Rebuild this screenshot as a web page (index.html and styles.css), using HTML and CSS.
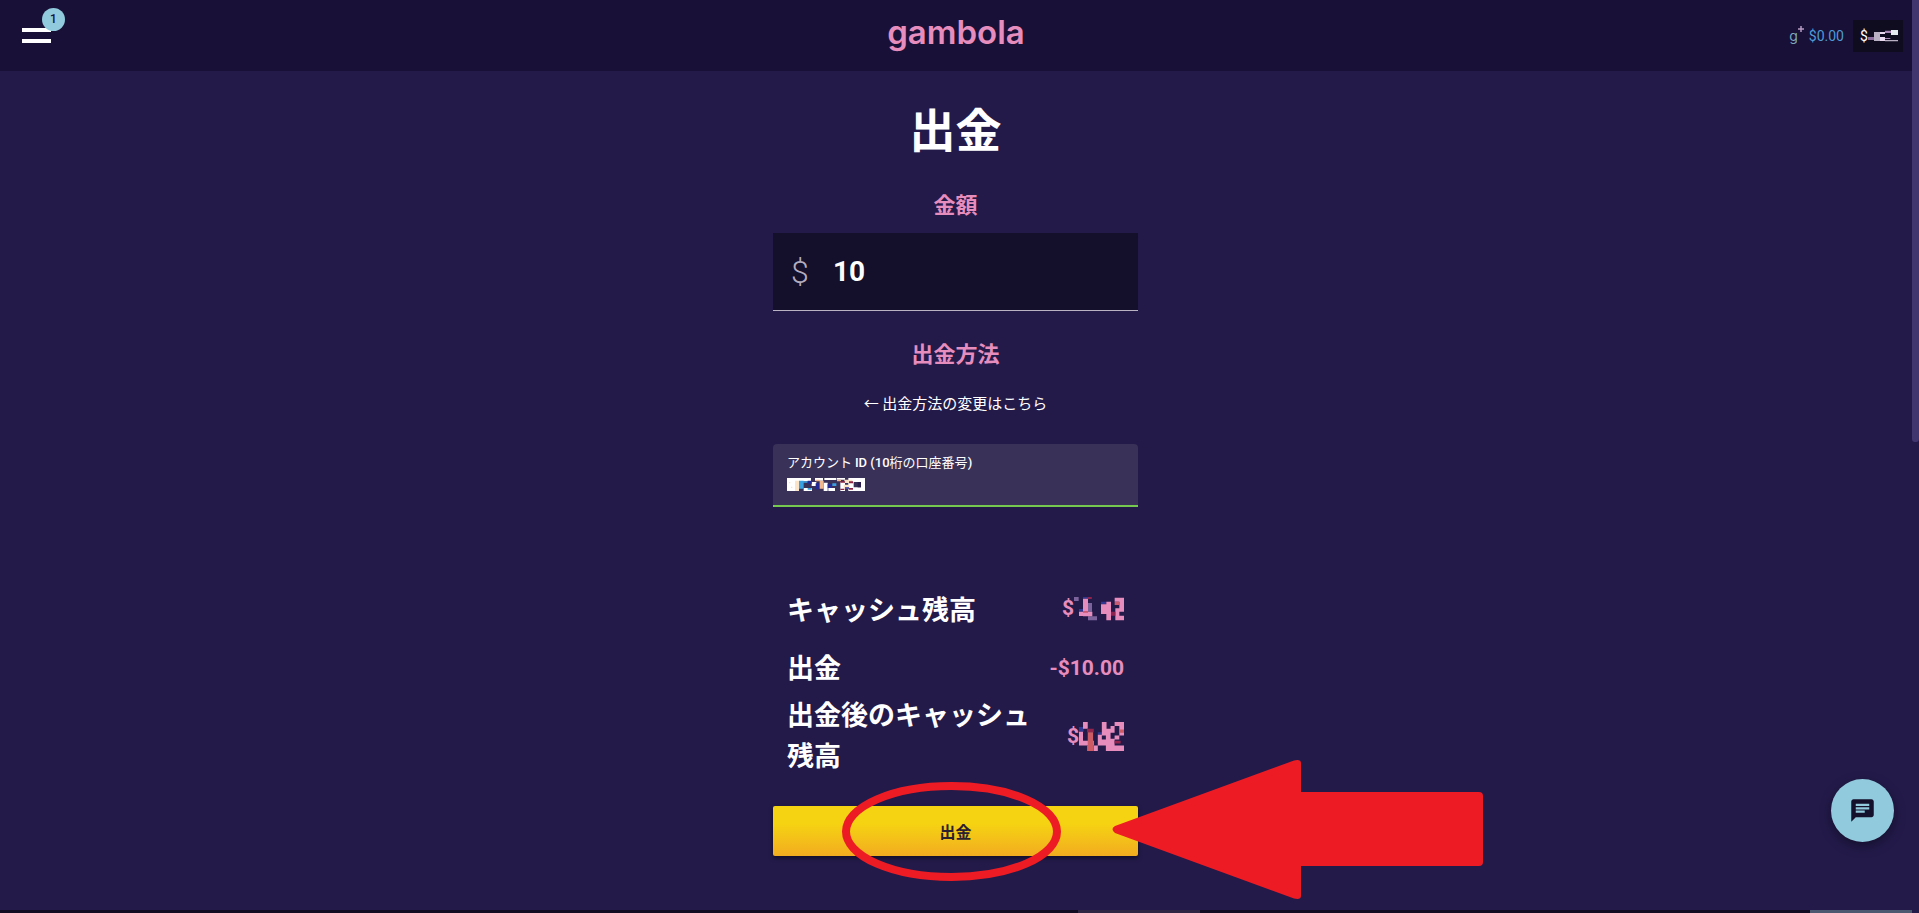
FILE: index.html
```html
<!DOCTYPE html>
<html lang="ja">
<head>
    <meta charset="UTF-8">
    <meta name="viewport" content="width=device-width, initial-scale=1.0">
    <title>出金</title>
    <link rel="stylesheet" href="styles.css">
</head>
<body>
    <header class="header">
        <div class="header-left">
            <button type="button" class="menu-button" aria-label="メニュー">
                <span class="menu-line"></span>
                <span class="menu-line"></span>
                <span class="menu-badge">1</span>
            </button>
        </div>
        <a href="#" class="logo">gambola</a>
        <div class="header-right">
            <a href="#" class="bonus">
                <span class="bonus-icon">g<svg class="bonus-star" viewBox="0 0 6 6"><path d="M3 0v6M0 3h6" stroke="#b79bc4" stroke-width="1.5"/></svg></span>
                <span>$0.00</span>
            </a>
            <a href="#" class="cash">$<svg class="cash-mask" viewBox="0 0 90 36">
                <path fill="#8a6b9b" d="M0 21h20v9H0z"/>
                <path fill="#b9b0c4" d="M18 6h18v27H18zM51 30h39v4H51z"/>
                <path fill="#e9d9ee" d="M36 21h15v12H36zM36 6h15v6H36z"/>
                <path fill="#a887b4" d="M51 2h18v7H51zM51 24h16v3H51z"/>
                <path fill="#e4eaf0" d="M69 0h21v15H69z"/>
            </svg></a>
        </div>
    </header>

    <main class="container">
        <h1 class="title">出金</h1>
        <form action="#" method="post">
            <label class="subtitle" for="amount">金額</label>
            <div class="amount-box">
                <span class="currency">$</span>
                <input class="amount-input" type="text" id="amount" name="amount" value="10">
            </div>

            <h2 class="subtitle method-title">出金方法</h2>
            <a href="#" class="back-link">← 出金方法の変更はこちら</a>

            <div class="account-box">
                <label for="account">アカウント <b>ID (10</b>桁の口座番号<b>)</b></label>
                <div class="account-value">
                    <input class="account-input" type="text" id="account" name="account">
                    <svg class="account-mask" viewBox="0 0 234 39">
                        <path fill="#ffffff" d="M0 0h36v39H0zM36 0h36v10H36zM50 30h25v9H50zM84 0h24v8H84zM74 12h14v12H74zM112 0h36v6h-36zM110 14h12v25h-12zM124 30h20v9h-20zM150 0h24v5h-24zM160 12h14v27h-14zM184 0h16v39h-16zM200 0h34v12h-34zM222 12h12v27h-12zM200 28h34v11h-34z"/>
                        <path fill="#fbe3c8" d="M24 8h12v31H24zM6 12h4v4H6zM12 26h4v4h-4zM172 5h24v10h-24zM170 20h18v12h-18z"/>
                        <path fill="#3a9fe0" d="M36 8h14v24H36zM50 10h12v4H50zM62 30h12v5H62zM136 16h12v8h-12z"/>
                        <path fill="#232a96" d="M62 8h12v10H62zM86 16h12v18H86zM122 18h12v12h-12zM174 28h12v4h-12z"/>
                        <path fill="#f0b88f" d="M98 8h12v24H98zM86 5h12v5H86zM150 5h12v5h-12z"/>
                        <path fill="#8e2443" d="M160 10h14v4h-14zM186 10h12v6h-12zM160 32h12v4h-12zM186 30h12v5h-12z"/>
                        <path fill="#2a1f4c" d="M212 12h10v16h-10z"/>
                    </svg>
                </div>
            </div>

            <dl class="summary">
                <div class="row row-balance">
                    <dt>キャッシュ残高</dt>
                    <dd>$<svg class="balance-mask" viewBox="0 0 150 72">
                        <path fill="#7d639b" d="M0 0h14v12H0zM42 18h12v26H42zM42 58h27v12H42z"/>
                        <path fill="#2f3790" d="M27 0h26v5H27zM15 36h12v8H15zM81 14h16v8H81z"/>
                        <path fill="#e78dbd" d="M27 5h15v39H27zM27 44h28v14H27zM15 44h12v13H15zM97 14h14v56H97zM81 22h16v29H81zM122 2h28v12h-28zM136 14h14v20h-14zM124 34h26v10h-26zM124 44h12v12h-12zM124 56h26v14h-26z"/>
                        <path fill="#8f2350" d="M42 0h11v6H42zM111 44h13v12h-13z"/>
                        <path fill="#c95a70" d="M122 14h14v10h-14zM27 42h15v5H27z"/>
                    </svg></dd>
                </div>
                <div class="row">
                    <dt>出金</dt>
                    <dd>-$10.00</dd>
                </div>
                <div class="row">
                    <dt>出金後のキャッシュ残高</dt>
                    <dd>$<svg class="after-mask" viewBox="0 0 134 86">
                        <path fill="#2f3790" d="M0 15h14v14H0zM56 30h12v8H56z"/>
                        <path fill="#e78dbd" d="M0 29h12v41H0zM12 0h14v20H12zM0 56h44v14H0zM44 70h12v16H44zM68 0h14v40H68zM56 38h12v32H56zM80 20h14v66H80zM68 52h14v18H68zM106 0h28v12h-28zM94 12h12v20H94zM120 12h14v28h-14zM106 40h14v12h-14zM94 50h12v36H94zM106 70h28v16h-28z"/>
                        <path fill="#94244c" d="M24 20h20v10H24zM106 56h18v8h-18z"/>
                        <path fill="#cc5b66" d="M26 30h16v40H26zM24 70h20v16H24zM120 22h14v10h-14z"/>
                    </svg></dd>
                </div>
            </dl>

            <div class="submit-wrap">
                <button type="submit" class="submit-button">出金</button>
                <!-- ボタンを示す丸と矢印 -->
                <svg class="mark-circle" viewBox="0 0 219 99">
                    <ellipse cx="109.5" cy="49.5" rx="105.5" ry="45.5" fill="none" stroke="#ed1c24" stroke-width="8"/>
                </svg>
                <svg class="mark-arrow" viewBox="0 0 371 139">
                    <path d="M3 66 182 0.5Q189-1 189 3V32H367Q371 32 371 36V102Q371 106 367 106H189V136Q189 140 182 138.500L3 73Q-2 69 3 66Z" fill="#ed1c24"/>
                </svg>
            </div>
        </form>
    </main>

    <button type="button" class="chat-button" aria-label="チャット">
        <svg class="chat-icon" viewBox="0 0 24 24">
            <path fill="#140f2a" d="M20 2H4c-1.100 0-1.990.9-1.990 2L2 22l4-4h14c1.100 0 2-.9 2-2V4c0-1.100-.9-2-2-2zM6 9h12v2H6V9zm8 5H6v-2h8v2zm4-6H6V6h12v2z"/>
        </svg>
    </button>

    <div class="bottom-bar">
        <span class="bar-dark"></span>
        <span class="bar-brown"></span>
        <span class="bar-dark"></span>
        <span class="bar-gray"></span>
    </div>
    <div class="scroll-thumb"></div>
</body>
</html>
```
FILE: styles.css
```css
* {
    box-sizing: border-box;
}

body {
    margin: 0;
    min-height: 100vh;
    overflow: hidden;
    background-color: #231a4a;
    color: #ffffff;
    font-family: "Noto Sans CJK JP", sans-serif;
}

a {
    color: inherit;
    text-decoration: none;
}

button {
    border: none;
    padding: 0;
    cursor: pointer;
}

/* ヘッダー */
.header {
    display: grid;
    grid-template-columns: 1fr auto 1fr;
    align-items: center;
    height: 71px;
    padding: 0 16px 0 9px;
    background-color: #181036;
}

.header-left {
    padding-left: 13px;
}

.menu-button {
    position: relative;
    display: flex;
    flex-direction: column;
    gap: 7px;
    width: 29px;
    background: none;
}

.menu-line {
    height: 4px;
    background-color: #ffffff;
}

.menu-badge {
    position: absolute;
    top: -20px;
    left: 20px;
    width: 23px;
    height: 23px;
    border-radius: 50%;
    background-color: #90cadc;
    color: #181036;
    font: 500 12px/23px Roboto, sans-serif;
    text-align: center;
}

.logo {
    color: #e78dbd;
    font: 600 33px/40px Inter, sans-serif;
    padding-bottom: 8px;
}

.header-right {
    display: flex;
    justify-content: flex-end;
    align-items: center;
    gap: 9px;
    font: 14px/32px Roboto, sans-serif;
}

.bonus {
    display: flex;
    gap: 5px;
    color: #4f9bd6;
}

.bonus-icon {
    display: flex;
    color: #7aa9bd;
    font-family: Inter, sans-serif;
}

.bonus-star {
    width: 6px;
    height: 6px;
    margin-top: 6px;
}

.cash {
    display: flex;
    align-items: center;
    width: 50px;
    height: 32px;
    padding-left: 7px;
    background-color: #100c20;
}

.cash-mask {
    width: 30px;
    height: 12px;
}

/* 出金フォーム */
.container {
    width: 100%;
    max-width: 373px;
    margin: 0 auto;
    padding: 26px 8px 0 0;
}

.title {
    margin: 0 0 31px;
    font-size: 46px;
    line-height: 60px;
    text-align: center;
}

.subtitle {
    display: block;
    margin: 0 0 15px;
    color: #e78dbd;
    font-size: 22px;
    font-weight: bold;
    line-height: 30px;
    text-align: center;
}

.amount-box {
    display: flex;
    align-items: center;
    height: 78px;
    padding-left: 18px;
    border-bottom: 1px solid #b9b3c4;
    background-color: #140f2a;
}

.currency {
    width: 42px;
    color: #b3adc0;
    font: 300 32px/40px Roboto, sans-serif;
}

.amount-input {
    flex: 1;
    min-width: 0;
    padding: 0;
    border: none;
    outline: none;
    background: none;
    color: #ffffff;
    font: bold 28px/40px Roboto, sans-serif;
}

.method-title {
    margin: 26px 0 24px;
}

.back-link {
    display: block;
    font-size: 15px;
    line-height: 24px;
    text-align: center;
}

.account-box {
    height: 63px;
    margin-top: 29px;
    padding: 8px 14px;
    border-bottom: 2px solid #76c94f;
    border-radius: 4px 4px 0 0;
    background-color: #393158;
    font-size: 13px;
    line-height: 20px;
}

.account-box label {
    display: block;
}

.account-box b {
    font-family: Roboto, sans-serif;
    font-weight: 500;
}

.account-value {
    position: relative;
    height: 24px;
}

.account-input {
    width: 100%;
    height: 24px;
    padding: 0;
    border: none;
    outline: none;
    background: none;
    color: #ffffff;
}

.account-mask {
    position: absolute;
    top: 5px;
    left: 0;
    width: 78px;
    height: 13px;
}

/* 残高 */
.summary {
    margin: 81px 0 31px;
    padding: 0 14px;
}

.row {
    display: grid;
    grid-template-columns: 1fr 80px;
    align-items: center;
    margin-bottom: 6px;
    font-size: 27px;
    font-weight: bold;
    line-height: 41px;
}

.row-balance {
    margin-bottom: 17px;
}

.row dd {
    display: flex;
    justify-content: flex-end;
    align-items: center;
    margin: 0;
    padding-top: 4px;
    color: #e78dbd;
    font: bold 21px/37px Roboto, sans-serif;
}

.row-balance dd {
    padding-top: 0;
}

.balance-mask {
    width: 50px;
    height: 24px;
}

.after-mask {
    width: 45px;
    height: 29px;
}

.submit-wrap {
    position: relative;
}

.submit-button {
    display: block;
    width: 100%;
    height: 50px;
    border-radius: 2px;
    background: linear-gradient(#f5d312 35%, #f2ac20);
    box-shadow: 0 2px 4px rgba(0, 0, 0, 0.5);
    color: #2a2030;
    font: bold 16px/48px "Noto Sans CJK JP", sans-serif;
}

.mark-circle {
    position: absolute;
    top: -24px;
    left: 69px;
    width: 219px;
    height: 99px;
    pointer-events: none;
}

.mark-arrow {
    position: absolute;
    top: -46px;
    left: 339px;
    width: 371px;
    height: 139px;
    pointer-events: none;
}

/* チャット */
.chat-button {
    position: fixed;
    right: 25px;
    bottom: 71px;
    display: flex;
    justify-content: center;
    align-items: center;
    width: 63px;
    height: 63px;
    border-radius: 50%;
    background-color: #90cadc;
    box-shadow: 0 4px 12px rgba(0, 0, 0, 0.4);
}

.chat-icon {
    width: 27px;
    height: 27px;
}

.bottom-bar {
    position: fixed;
    right: 7px;
    bottom: 0;
    left: 0;
    display: grid;
    grid-template-columns: 1078fr 122fr 610fr 102fr;
    height: 3px;
}

.bar-dark {
    background-color: #110c22;
}

.bar-brown {
    background-color: #2f2644;
}

.bar-gray {
    background-color: #4c5870;
}

.scroll-thumb {
    position: fixed;
    top: 0;
    right: 0;
    width: 7px;
    height: 442px;
    border-radius: 0 0 3px 3px;
    background-color: #42366f;
}
```
